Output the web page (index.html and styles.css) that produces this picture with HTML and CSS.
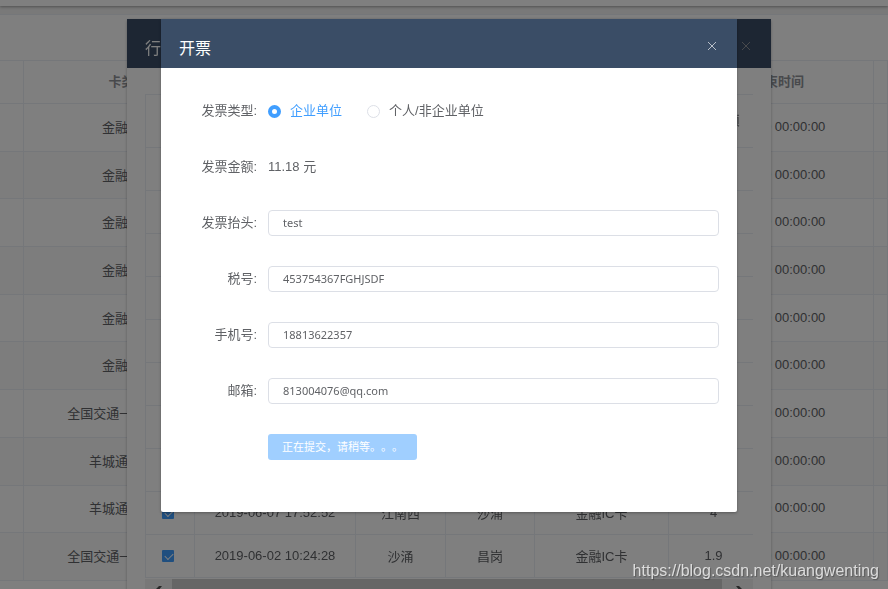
FILE: index.html
```html
<!DOCTYPE html>
<html lang="zh-CN">
<head>
    <meta charset="UTF-8">
    <meta name="viewport" content="width=device-width, initial-scale=1.0">
    <title>开票</title>
    <link rel="stylesheet" href="styles.css">
</head>
<body>
    <div class="topbar"></div>
    <main class="panel">
        <table class="cards">
            <colgroup>
                <col class="c-edge"><col class="c-type"><col><col class="c-time"><col class="c-edge">
            </colgroup>
            <thead>
                <tr><th></th><th>卡类型</th><th></th><th>优惠结束时间</th><th></th></tr>
            </thead>
            <tbody>
                <tr><td></td><td>金融IC卡</td><td></td><td>2019-06-30 00:00:00</td><td></td></tr>
                <tr><td></td><td>金融IC卡</td><td></td><td>2019-06-30 00:00:00</td><td></td></tr>
                <tr><td></td><td>金融IC卡</td><td></td><td>2019-06-30 00:00:00</td><td></td></tr>
                <tr><td></td><td>金融IC卡</td><td></td><td>2019-06-30 00:00:00</td><td></td></tr>
                <tr><td></td><td>金融IC卡</td><td></td><td>2019-06-30 00:00:00</td><td></td></tr>
                <tr><td></td><td>金融IC卡</td><td></td><td>2019-06-30 00:00:00</td><td></td></tr>
                <tr><td></td><td>全国交通一卡通-IC卡</td><td></td><td>2019-06-30 00:00:00</td><td></td></tr>
                <tr><td></td><td>羊城通学生卡</td><td></td><td>2019-06-30 00:00:00</td><td></td></tr>
                <tr><td></td><td>羊城通学生卡</td><td></td><td>2019-06-30 00:00:00</td><td></td></tr>
                <tr><td></td><td>全国交通一卡通-IC卡</td><td></td><td>2019-06-30 00:00:00</td><td></td></tr>
            </tbody>
        </table>
    </main>

    <div class="layer">
        <section class="dialog dialog-trips">
            <header class="dialog-header">
                <h2>行程</h2>
                <button type="button" class="close" aria-label="关闭">
                    <svg width="10" height="10" viewBox="0 0 10 10"><path d="M1 1l8 8M9 1l-8 8"/></svg>
                </button>
            </header>
            <div class="trips-body">
                <div class="trips-wrap">
                    <table class="trips">
                        <colgroup>
                            <col class="t-check"><col class="t-time"><col class="t-in"><col class="t-out"><col class="t-card"><col class="t-fee">
                        </colgroup>
                        <thead>
                            <tr><th></th><th>时间</th><th>进站</th><th>出站</th><th>卡类型</th><th>交易金额</th></tr>
                        </thead>
                        <tbody>
                            <tr><td></td><td></td><td></td><td></td><td></td><td></td></tr>
                            <tr><td></td><td></td><td></td><td></td><td></td><td></td></tr>
                            <tr><td></td><td></td><td></td><td></td><td></td><td></td></tr>
                            <tr><td></td><td></td><td></td><td></td><td></td><td></td></tr>
                            <tr><td></td><td></td><td></td><td></td><td></td><td></td></tr>
                            <tr><td></td><td></td><td></td><td></td><td></td><td></td></tr>
                            <tr><td></td><td></td><td></td><td></td><td></td><td></td></tr>
                            <tr><td></td><td></td><td></td><td></td><td></td><td></td></tr>
                            <tr><td><input type="checkbox" aria-label="选择" checked></td><td>2019-06-07 17:52:52</td><td>江南西</td><td>沙涌</td><td>金融IC卡</td><td>4</td></tr>
                            <tr><td><input type="checkbox" aria-label="选择" checked></td><td>2019-06-02 10:24:28</td><td>沙涌</td><td>昌岗</td><td>金融IC卡</td><td>1.9</td></tr>
                        </tbody>
                    </table>
                </div>
                <div class="scrollbar">
                    <svg width="27" height="20" viewBox="0 0 27 20"><path d="M17 7h-3l-5 5 5 5h3l-4-5z"/></svg>
                    <div class="thumb"></div>
                    <svg width="31" height="20" viewBox="0 0 31 20"><path d="M14 7h3l5 5-5 5h-3l4-5z"/></svg>
                </div>
            </div>
        </section>
    </div>

    <div class="layer mask">
        <section class="dialog dialog-invoice">
            <header class="dialog-header">
                <h2>开票</h2>
                <button type="button" class="close" aria-label="关闭">
                    <svg width="10" height="10" viewBox="0 0 10 10"><path d="M1 1l8 8M9 1l-8 8"/></svg>
                </button>
            </header>
            <form class="invoice">
                <div class="row">
                    <span class="label">发票类型:</span>
                    <div class="radios">
                        <label><input type="radio" name="type" checked><span>企业单位</span></label>
                        <label><input type="radio" name="type"><span>个人/非企业单位</span></label>
                    </div>
                </div>
                <div class="row">
                    <span class="label">发票金额:</span>
                    <span class="amount">11.18 元</span>
                </div>
                <div class="row">
                    <label class="label" for="title">发票抬头:</label>
                    <input class="text" type="text" id="title" value="test">
                </div>
                <div class="row">
                    <label class="label" for="tax">税号:</label>
                    <input class="text" type="text" id="tax" value="453754367FGHJSDF">
                </div>
                <div class="row">
                    <label class="label" for="phone">手机号:</label>
                    <input class="text" type="text" id="phone" value="18813622357">
                </div>
                <div class="row">
                    <label class="label" for="email">邮箱:</label>
                    <input class="text" type="text" id="email" value="813004076@qq.com">
                </div>
                <div class="row">
                    <span class="label"></span>
                    <button type="submit" class="submit" disabled>正在提交，请稍等。。。</button>
                </div>
            </form>
        </section>
    </div>

    <div class="watermark">https://blog.csdn.net/kuangwenting</div>
</body>
</html>
```
FILE: styles.css
```css
* {
    box-sizing: border-box;
}

body {
    margin: 0;
    height: 100vh;
    overflow: hidden;
    background-color: #f2f2f2;
    color: #606266;
    font-family: "Liberation Sans", "Noto Sans CJK SC", sans-serif;
    font-size: 13px;
}

.topbar {
    height: 6px;
    background-color: #fff;
    box-shadow: 0 1px 3px rgba(0, 0, 0, 0.35);
}

.panel {
    margin-top: 8px;
    padding-top: 45px;
    border-top: 1px solid #ebeef5;
    background-color: #fff;
    min-height: 100vh;
}

table {
    border-collapse: separate;
    border-spacing: 0;
    table-layout: fixed;
}

th, td {
    padding: 0 0 2px;
    border-right: 1px solid #ebeef5;
    border-bottom: 1px solid #ebeef5;
    text-align: center;
    white-space: nowrap;
}

th {
    padding-bottom: 4px;
    color: #909399;
    font-weight: bold;
}

/* card list behind the dialogs */
.cards {
    width: 100%;
    height: 521px;
    border-top: 1px solid #ebeef5;
}

.cards th {
    height: 43px;
}

.cards tbody tr:nth-child(even) {
    background-color: #fafafa;
}

.c-edge {
    width: 24px;
}

.c-edge:last-child {
    width: 14px;
}

.c-type {
    width: 209px;
}

.c-time {
    width: 217px;
}

.layer {
    position: fixed;
    inset: 0;
    display: flex;
    justify-content: center;
    align-items: flex-start;
    padding: 19px 0 0 10px;
    overflow: hidden;
}

.mask {
    background-color: rgba(0, 0, 0, 0.5);
}

.dialog {
    background-color: #fff;
    border-radius: 2px;
    box-shadow: 0 1px 3px rgba(0, 0, 0, 0.3);
}

.dialog-trips {
    width: 644px;
}

.dialog-invoice {
    width: 576px;
}

.dialog-header {
    display: flex;
    justify-content: space-between;
    align-items: center;
    height: 49px;
    padding: 5px 20px 0 18px;
    background-color: #3a4d66;
}

.dialog-header h2 {
    margin: 0;
    padding-top: 6px;
    color: #fff;
    font-size: 16px;
    font-weight: normal;
    line-height: 24px;
}

.close {
    display: flex;
    padding: 0;
    border: none;
    background: none;
    cursor: pointer;
}

.close svg {
    fill: none;
    stroke: #b9c0c9;
    stroke-width: 1;
}

.dialog-trips .close svg {
    stroke: #909399;
}

/* trips table */
.trips-body {
    padding: 26px 18px;
}

.trips-wrap {
    overflow: hidden;
    border-top: 1px solid #ebeef5;
    border-left: 1px solid #ebeef5;
}

.trips {
    width: 613px;
}

.trips th {
    height: 53px;
}

.trips td {
    height: 43px;
}

.t-check {
    width: 49px;
}

.t-time {
    width: 161px;
}

.t-in, .t-fee {
    width: 90px;
}

.t-out {
    width: 89px;
}

.t-card {
    width: 134px;
}

.trips input {
    appearance: none;
    display: block;
    width: 12px;
    height: 12px;
    margin: 2px 0 0 16px;
    border-radius: 1px;
    background-color: #409eff;
}

.trips input::after {
    content: "";
    display: block;
    width: 7px;
    height: 4px;
    margin: 3px 0 0 3px;
    border-left: 1px solid #fff;
    border-bottom: 1px solid #fff;
    transform: rotate(-45deg);
}

.scrollbar {
    display: flex;
    height: 20px;
    margin-top: 1px;
    background-color: #f1f1f1;
}

.scrollbar svg {
    fill: #505050;
}

.thumb {
    flex: 1;
    background-color: #cdcdcd;
}

/* invoice form */
.invoice {
    display: flex;
    flex-direction: column;
    gap: 30px;
    padding: 30px 18px 52px;
}

.row {
    display: flex;
    align-items: center;
    gap: 11px;
    height: 26px;
}

.label {
    width: 78px;
    padding-bottom: 3px;
    text-align: right;
}

.amount {
    padding-bottom: 3px;
}

.radios {
    display: flex;
    gap: 25px;
}

.radios label {
    display: flex;
    align-items: center;
    gap: 9px;
}

.radios span {
    padding-bottom: 3px;
}

.radios input {
    appearance: none;
    width: 13px;
    height: 13px;
    margin: 0;
    border: 1px solid #dcdfe6;
    border-radius: 50%;
    background-color: #fff;
}

.radios input:checked {
    border: 4px solid #409eff;
}

.radios input:checked + span {
    color: #409eff;
}

.text {
    flex: 1;
    height: 26px;
    padding: 0 14px 2px;
    border: 1px solid #dcdfe6;
    border-radius: 4px;
    color: #606266;
    font-family: "Noto Sans", sans-serif;
    font-size: 11px;
}

.submit {
    height: 26px;
    padding: 0 14px 2px;
    border: none;
    border-radius: 3px;
    background-color: #a0cfff;
    color: #fff;
    font-family: inherit;
    font-size: 11px;
    text-spacing-trim: space-all;
}

.watermark {
    position: fixed;
    right: 9px;
    bottom: 8px;
    color: rgba(255, 255, 255, 0.75);
    font-size: 16px;
    line-height: 20px;
    text-shadow: 1px 1px 1px rgba(0, 0, 0, 0.3);
}
```
